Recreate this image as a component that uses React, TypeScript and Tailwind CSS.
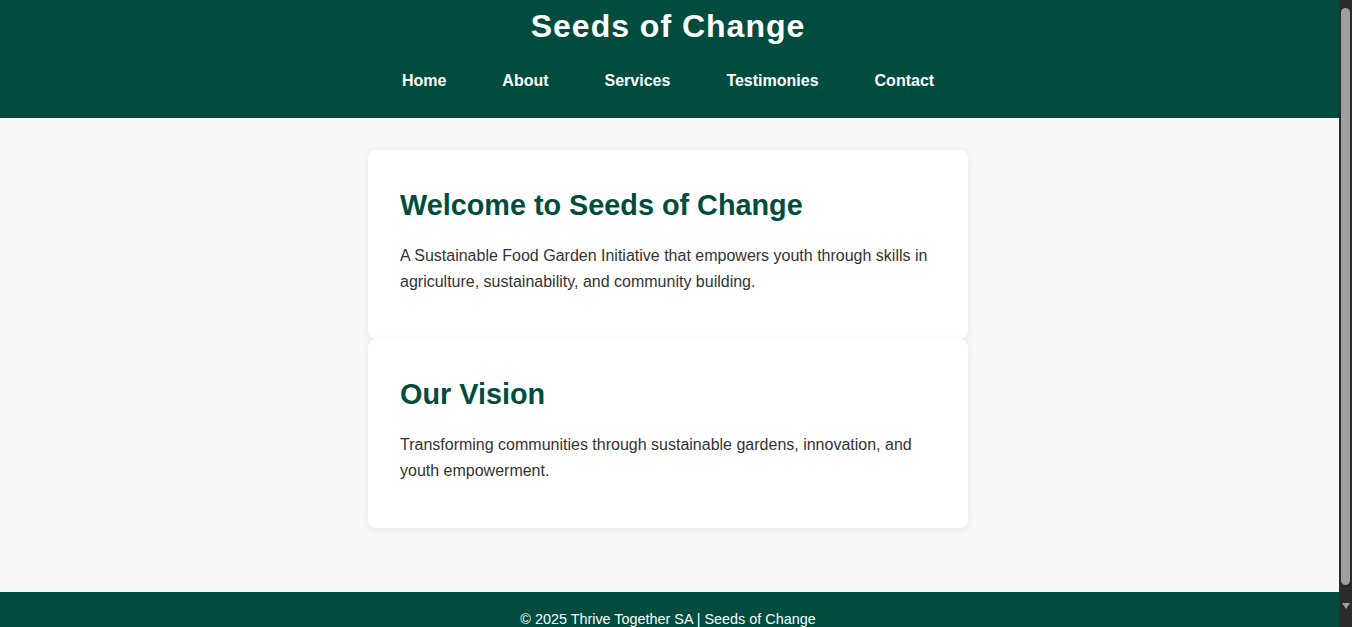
const links = ['Home', 'About', 'Services', 'Testimonies', 'Contact']

const sections = [
  {
    title: 'Welcome to Seeds of Change',
    text: 'A Sustainable Food Garden Initiative that empowers youth through skills in agriculture, sustainability, and community building.',
  },
  {
    title: 'Our Vision',
    text: 'Transforming communities through sustainable gardens, innovation, and youth empowerment.',
  },
]

function ScrollTrack() {
  return (
    <div className="flex h-screen w-[13px] shrink-0 flex-col items-center bg-[#2b2b2b] pt-[8px]">
      <div className="h-[577px] w-[9px] rounded-full bg-[#9f9f9f]" />
      <div className="mt-[18px] h-0 w-0 border-x-[4px] border-t-[6px] border-x-transparent border-t-[#9f9f9f]" />
    </div>
  )
}

export default function App() {
  return (
    <div className="flex h-screen overflow-hidden bg-[#f8f8f8] font-['Liberation_Sans',Arial,sans-serif] text-[#333]">
      <div className="min-w-0 flex-1">
        <header className="h-[118px] bg-[#004d40] pr-[3px] pt-[8px] text-center text-white">
          <h1 className="text-[32px] font-bold leading-[37px] tracking-[1px]">Seeds of Change</h1>
          <nav className="mt-[24px]">
            <ul className="flex justify-center">
              {links.map((link) => (
                <li key={link}>
                  <a href="#" className="px-[28px] text-base font-bold leading-[18px] text-white">
                    {link}
                  </a>
                </li>
              ))}
            </ul>
          </nav>
        </header>

        <main className="flex flex-col items-center pb-[64px] pr-[3px] pt-[32px]">
          {sections.map((section) => (
            <section
              key={section.title}
              className="h-[189px] w-[600px] rounded-lg bg-white px-[32px] pt-[32px] shadow-[0_2px_8px_rgba(0,0,0,0.08)]"
            >
              <h2 className="text-[28.8px] font-bold leading-[46px] text-[#004d40]">{section.title}</h2>
              <p className="mt-[15px] text-base leading-[25.6px] text-[#333]">{section.text}</p>
            </section>
          ))}
        </main>

        <footer className="bg-[#004d40] pb-[19px] pr-[3px] pt-[19px] text-center text-[14.4px] leading-[17px] text-white">
          © 2025 Thrive Together SA | Seeds of Change
        </footer>
      </div>
      <ScrollTrack />
    </div>
  )
}
